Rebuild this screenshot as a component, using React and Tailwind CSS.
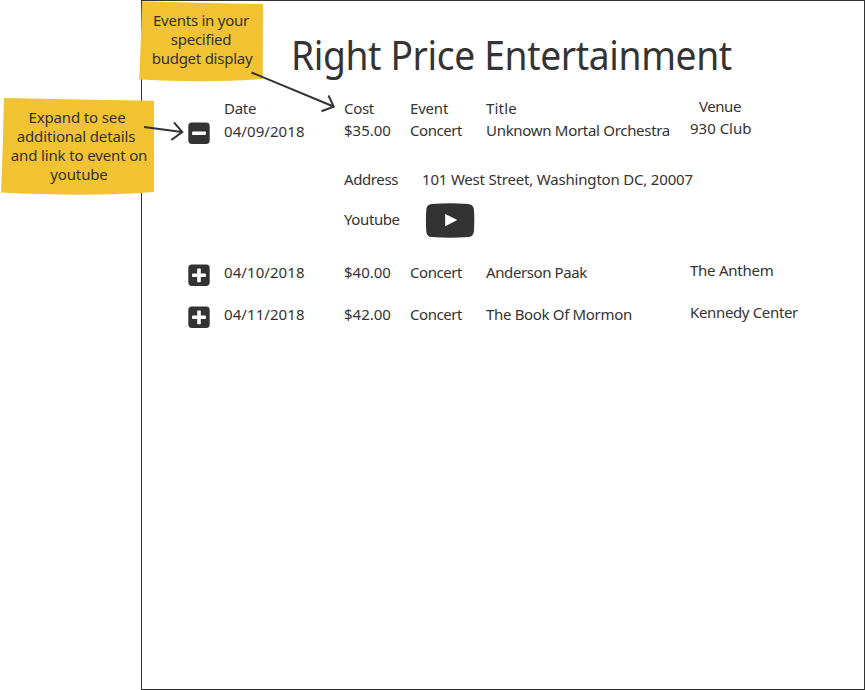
import React from 'react';

const COLS = 'grid grid-cols-[36px_120px_66px_76px_204px_1fr] h-5 pl-[46px]';

function ToggleIcon({ open }) {
  return (
    <svg viewBox="0 0 22 22" className="mt-0.5 h-[22px] w-[22px]" fill="#fff">
      <rect x="0.3" y="0.5" width="21.4" height="21.4" rx="3.6" fill="#333333" />
      <rect x="4.1" y="9.5" width="13.8" height="3.5" rx="0.8" />
      {!open && <rect x="9.2" y="4.4" width="3.6" height="13.8" rx="0.8" />}
    </svg>
  );
}

function EventRow({ open, date, cost, title, venue, dateClass = '', titleClass, venueClass = '' }) {
  return (
    <div className={COLS}>
      <ToggleIcon open={open} />
      <span className={`tracking-[0.08px] ${dateClass}`}>{date}</span>
      <span className="tracking-[0px]">{cost}</span>
      <span className="tracking-[-0.45px]">Concert</span>
      <span className={titleClass}>{title}</span>
      <span className={`-mt-0.5 ${venueClass}`}>{venue}</span>
    </div>
  );
}

export default function App() {
  return (
    <div className="relative h-[690px] w-[865px] overflow-hidden bg-white pl-[141px] font-['Noto_Sans',sans-serif] text-[15px] leading-5 whitespace-nowrap text-[#333333]">
      <main className="flex h-[690px] w-[724px] flex-col border border-[#333333]">
        <h1 className="mt-[27px] ml-[149px] h-[54px] w-[500px] origin-left scale-x-[0.93] text-[40px] leading-[54px] tracking-[-0.4px]">
          Right Price Entertainment
        </h1>
        <div className={`${COLS} mt-4`}>
          <span className="col-start-2 tracking-[-0.3px]">Date</span>
          <span className="tracking-[-0.3px]">Cost</span>
          <span className="tracking-[-0.2px]">Event</span>
          <span className="tracking-[0.2px]">Title</span>
          <span className="-mt-0.5 pl-[9px] tracking-[-0.45px]">Venue</span>
        </div>
        <div className="mt-0.5">
          <EventRow open date="04/09/2018" cost="$35.00" title="Unknown Mortal Orchestra" venue="930 Club" dateClass="mt-px" titleClass="tracking-[-0.3px]" />
        </div>
        <div className="mt-[29px] ml-[202px] flex h-5">
          <span className="w-[78px] tracking-[-0.4px]">Address</span>
          <span className="tracking-[-0.19px]">101 West Street, Washington DC, 20007</span>
        </div>
        <div className="mt-[14px] ml-[202px] flex h-[35px] items-start">
          <span className="mt-[6px] w-[81px] tracking-[-0.4px]">Youtube</span>
          <svg viewBox="0 0 50 35" className="h-[35px] w-[50px]">
            <path d="M7 .9Q25-.3 43 .9Q48.3 1.3 48.9 6.5Q49.7 17.5 48.9 28.5Q48.3 33.8 43 34.1Q25 35.2 7 34.1Q1.7 33.8 1.3 28.5Q.5 17.5 1.3 6.5Q1.7 1.3 7 .9Z" fill="#333333" />
            <path d="M20.2 11 32.3 17.1 20.2 23.3Z" fill="#fff" />
          </svg>
        </div>
        <div className="mt-6 flex flex-col gap-[22px]">
          <EventRow date="04/10/2018" cost="$40.00" title="Anderson Paak" venue="The Anthem" titleClass="tracking-[-0.4px]" venueClass="tracking-[-0.25px]" />
          <EventRow date="04/11/2018" cost="$42.00" title="The Book Of Mormon" venue="Kennedy Center" titleClass="tracking-[-0.33px]" venueClass="tracking-[-0.35px]" />
        </div>
      </main>

      <aside className="absolute top-0 left-[138px] h-[84px] w-[128px] pt-[11px] text-center leading-[19px] tracking-[-0.25px]">
        <svg viewBox="0 0 128 84" className="absolute inset-0 h-full w-full">
          <path d="M4 1.2Q65 3 125 4L124.8 79Q72 83 1.2 79.5Q3 40 4 1.2Z" fill="#f1c232" />
        </svg>
        <div className="relative">
          <span className="relative -left-px">Events in your</span><br />
          <span className="relative -left-px">specified</span><br />
          budget display
        </div>
      </aside>
      <aside className="absolute top-[96px] left-0 h-[100px] w-[156px] pt-[12px] text-center leading-[19px] tracking-[-0.14px]">
        <svg viewBox="0 0 156 100" className="absolute inset-0 h-full w-full">
          <path d="M4 2Q78 3.8 154 4.8L154 96Q90 101 1 96.5Q3 49 4 2Z" fill="#f1c232" />
        </svg>
        <div className="relative">
          <span className="relative -left-px">Expand to see</span><br />
          <span className="relative -left-0.5">additional details</span><br />
          <span className="relative left-px">and link to event on</span><br />
          <span className="relative left-px">youtube</span>
        </div>
      </aside>
      <svg viewBox="0 0 865 690" className="pointer-events-none absolute inset-0" fill="none" stroke="#333333" strokeWidth="2">
        <path d="M251.5 72.5 333.5 106.5M328.5 95.5 333.7 106.6 321.5 111.2" />
        <path d="M144 127 182 132M174 122.3 182.3 132 171.3 140" />
      </svg>
    </div>
  );
}
